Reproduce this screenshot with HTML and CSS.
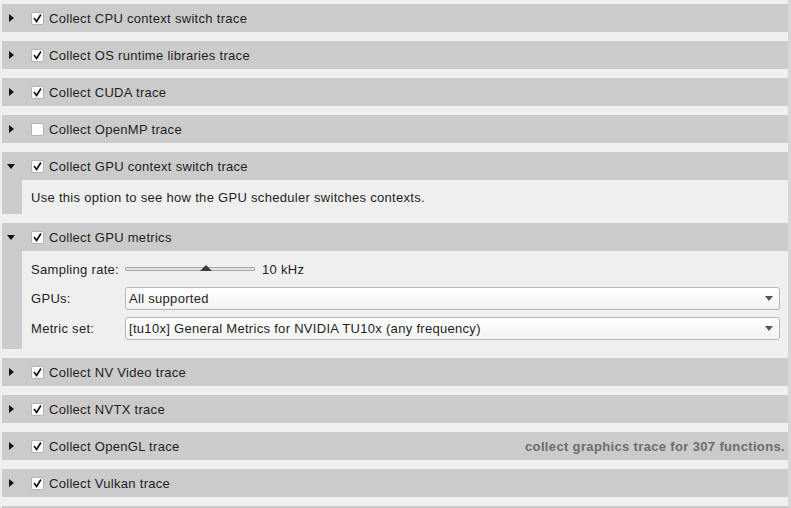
FILE: index.html
```html
<!DOCTYPE html>
<html>
<head>
<meta charset="utf-8">
<link rel="stylesheet" href="styles.css">
</head>
<body>
<div class="page">
  <div class="list">
    <div class="section">
      <div class="header"><span class="tri right"></span><span class="cb checked"><svg viewBox="0 0 13 13"><path d="M3 6.8 L5.4 10 L10 2.6" /></svg></span><span class="title">Collect CPU context switch trace</span></div>
    </div>
    <div class="section">
      <div class="header"><span class="tri right"></span><span class="cb checked"><svg viewBox="0 0 13 13"><path d="M3 6.8 L5.4 10 L10 2.6" /></svg></span><span class="title">Collect OS runtime libraries trace</span></div>
    </div>
    <div class="section">
      <div class="header"><span class="tri right"></span><span class="cb checked"><svg viewBox="0 0 13 13"><path d="M3 6.8 L5.4 10 L10 2.6" /></svg></span><span class="title">Collect CUDA trace</span></div>
    </div>
    <div class="section">
      <div class="header"><span class="tri right"></span><span class="cb"></span><span class="title">Collect OpenMP trace</span></div>
    </div>
    <div class="section">
      <div class="header"><span class="tri down"></span><span class="cb checked"><svg viewBox="0 0 13 13"><path d="M3 6.8 L5.4 10 L10 2.6" /></svg></span><span class="title">Collect GPU context switch trace</span></div>
      <div class="body">
        <div class="strip"></div>
        <div class="content desc">Use this option to see how the GPU scheduler switches contexts.</div>
      </div>
    </div>
    <div class="section">
      <div class="header"><span class="tri down"></span><span class="cb checked"><svg viewBox="0 0 13 13"><path d="M3 6.8 L5.4 10 L10 2.6" /></svg></span><span class="title">Collect GPU metrics</span></div>
      <div class="body">
        <div class="strip"></div>
        <div class="content form">
          <div class="row">
            <span class="label">Sampling rate:</span>
            <span class="slider"><span class="track"></span><span class="thumb"></span></span>
            <span class="value">10 kHz</span>
          </div>
          <div class="row">
            <span class="label">GPUs:</span>
            <span class="select"><span class="sel-text">All supported</span><span class="arrow"></span></span>
          </div>
          <div class="row">
            <span class="label">Metric set:</span>
            <span class="select"><span class="sel-text">[tu10x] General Metrics for NVIDIA TU10x (any frequency)</span><span class="arrow"></span></span>
          </div>
        </div>
      </div>
    </div>
    <div class="section">
      <div class="header"><span class="tri right"></span><span class="cb checked"><svg viewBox="0 0 13 13"><path d="M3 6.8 L5.4 10 L10 2.6" /></svg></span><span class="title">Collect NV Video trace</span></div>
    </div>
    <div class="section">
      <div class="header"><span class="tri right"></span><span class="cb checked"><svg viewBox="0 0 13 13"><path d="M3 6.8 L5.4 10 L10 2.6" /></svg></span><span class="title">Collect NVTX trace</span></div>
    </div>
    <div class="section">
      <div class="header"><span class="tri right"></span><span class="cb checked"><svg viewBox="0 0 13 13"><path d="M3 6.8 L5.4 10 L10 2.6" /></svg></span><span class="title">Collect OpenGL trace</span><span class="note">collect graphics trace for 307 functions.</span></div>
    </div>
    <div class="section">
      <div class="header"><span class="tri right"></span><span class="cb checked"><svg viewBox="0 0 13 13"><path d="M3 6.8 L5.4 10 L10 2.6" /></svg></span><span class="title">Collect Vulkan trace</span></div>
    </div>
    <div class="section">
      <div class="header"></div>
    </div>
  </div>
  <div class="scroll"></div>
</div>
</body>
</html>
```

FILE: styles.css
```css
* { box-sizing: border-box; }
html, body {
  margin: 0;
  padding: 0;
  width: 791px;
  height: 508px;
  overflow: hidden;
  background: #efefef;
  font-family: "Liberation Sans", Arial, sans-serif;
  font-size: 13px;
  letter-spacing: 0.3px;
  color: #1e1e1e;
}
.page {
  display: flex;
  height: 508px;
  overflow: hidden;
}
.list {
  flex: 1;
  display: flex;
  flex-direction: column;
  gap: 9px;
  padding: 4px 0 0 2px;
  overflow: hidden;
}
.section { flex-shrink: 0; }
.scroll {
  width: 3px;
  background: #d6d6d6;
}
.header {
  height: 28px;
  background: #cbcbcb;
  display: flex;
  align-items: center;
  flex-shrink: 0;
}
.tri {
  width: 0;
  height: 0;
  margin-left: 7px;
}
.tri.right {
  border-top: 4px solid transparent;
  border-bottom: 4px solid transparent;
  border-left: 5px solid #111;
  margin-right: 17px;
}
.tri.down {
  border-left: 4px solid transparent;
  border-right: 4px solid transparent;
  border-top: 5px solid #111;
  margin-left: 5px;
  margin-right: 16px;
}
.cb {
  width: 13px;
  height: 13px;
  background: #fff;
  border: 1px solid #b3b3b3;
  border-radius: 2px;
  display: inline-flex;
  margin-right: 5px;
}
.cb svg {
  width: 11px;
  height: 11px;
}
.cb path {
  fill: none;
  stroke: #111;
  stroke-width: 2;
  stroke-linecap: square;
}
.note {
  margin-left: auto;
  margin-right: 3px;
  font-weight: bold;
  color: #6d6d6d;
  letter-spacing: 0.35px;
}
.body {
  display: flex;
  background: #efefef;
}
.strip {
  width: 20px;
  background: #cbcbcb;
}
.content {
  flex: 1;
  padding-left: 9px;
}
.desc {
  height: 34px;
  display: flex;
  align-items: center;
  padding-top: 1px;
}
.form {
  display: flex;
  flex-direction: column;
  padding-top: 7px;
  padding-right: 8px;
  gap: 7px;
  height: 98px;
}
.row {
  display: flex;
  align-items: center;
  height: 23px;
}
.row:first-child { height: 22px; }
.label {
  width: 94px;
}
.slider {
  position: relative;
  width: 130px;
  height: 14px;
  display: inline-block;
}
.track {
  position: absolute;
  left: 0;
  right: 0;
  top: 5px;
  height: 4px;
  border: 1px solid #a9a9a9;
  background: #e2e2e2;
  border-radius: 1px;
}
.thumb {
  position: absolute;
  left: 75px;
  top: 3px;
  width: 0;
  height: 0;
  border-left: 6px solid transparent;
  border-right: 6px solid transparent;
  border-bottom: 6px solid #3a3a3a;
}
.value {
  margin-left: 7px;
}
.select {
  flex: 1;
  height: 23px;
  border: 1px solid #b6b6b6;
  border-radius: 3px;
  background: linear-gradient(#ffffff, #f2f2f2);
  display: flex;
  align-items: center;
  padding-left: 3px;
  padding-right: 6px;
}
.sel-text { flex: 1; }
.arrow {
  width: 0;
  height: 0;
  border-left: 4px solid transparent;
  border-right: 4px solid transparent;
  border-top: 5px solid #555;
}
```
